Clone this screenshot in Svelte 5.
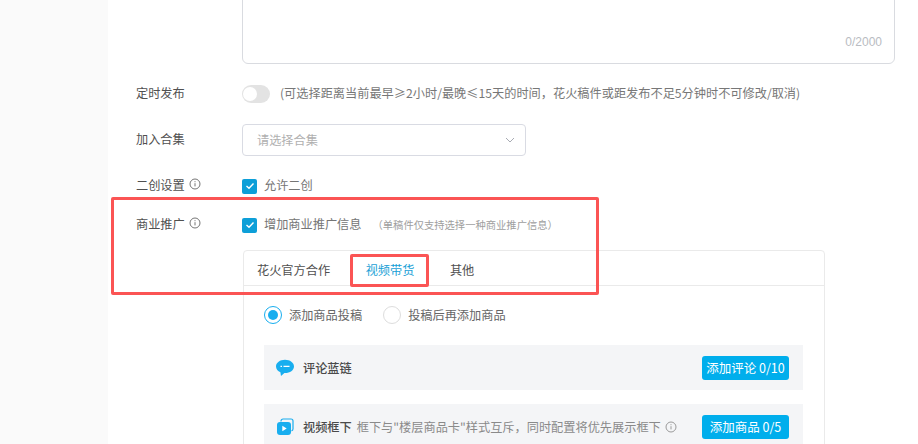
<script>
  const hint = '(可选择距离当前最早≥2小时/最晚≤15天的时间，花火稿件或距发布不足5分钟时不可修改/取消)';
</script>

<div class="page">
  <aside class="side"></aside>
  <main class="main">
    <div class="area"><span class="count">0/2000</span></div>

    <div class="row r-time">
      <div class="label">定时发布</div>
      <div class="content">
        <span class="toggle"><span class="knob"></span></span>
        <span class="hint">{hint}</span>
      </div>
    </div>

    <div class="row r-coll">
      <div class="label">加入合集</div>
      <div class="select">
        <span>请选择合集</span>
        <svg width="10" height="6" viewBox="0 0 10 6"><path d="M1 1l4 4 4-4" fill="none" stroke="#a8abb3" stroke-width="1"/></svg>
      </div>
    </div>

    <div class="row r-second">
      <div class="label">二创设置 <svg class="info" viewBox="0 0 12 12"><circle cx="6" cy="6" r="5" fill="none" stroke="#757575"/><path d="M6 5.2v3.2M6 3.2v1" stroke="#757575"/></svg></div>
      <label class="check">
        <span class="box"><svg width="10" height="8" viewBox="0 0 10 8"><path d="M1.5 4l2.500 2.300 4.500-4.800" fill="none" stroke="#fff" stroke-width="1.400"/></svg></span>
        <span class="muted">允许二创</span>
      </label>
    </div>

    <div class="row r-biz">
      <div class="label">商业推广 <svg class="info" viewBox="0 0 12 12"><circle cx="6" cy="6" r="5" fill="none" stroke="#757575"/><path d="M6 5.2v3.2M6 3.2v1" stroke="#757575"/></svg></div>
      <label class="check">
        <span class="box"><svg width="10" height="8" viewBox="0 0 10 8"><path d="M1.5 4l2.500 2.300 4.500-4.800" fill="none" stroke="#fff" stroke-width="1.400"/></svg></span>
        <span class="muted">增加商业推广信息</span>
        <span class="tip">（单稿件仅支持选择一种商业推广信息）</span>
      </label>
    </div>

    <section class="card">
      <div class="tabs">
        <span class="tab">花火官方合作</span>
        <span class="tab active">视频带货</span>
        <span class="tab">其他</span>
      </div>
      <div class="body">
        <div class="radios">
          <span class="radio"><span class="dot on"></span>添加商品投稿</span>
          <span class="radio"><span class="dot"></span>投稿后再添加商品</span>
        </div>
        <div class="item">
          <svg class="ico" width="18" height="18" viewBox="0 0 18 18"><path d="M9 .8c5 0 9 2.900 9 6.700 0 3.800-4 6.500-9 6.500h-.6L5 17l-.6-3.700C1.800 12.100 0 10 0 7.500 0 3.700 4 .8 9 .8z" fill="#18aeef"/><path d="M4.500 7.400h1.500M7.500 7.400h6" stroke="#fff" stroke-width="1.400"/></svg>
          <b class="name plain">评论蓝链</b>
          <span class="btn">添加评论 0/10</span>
        </div>
        <div class="item">
          <svg class="ico" width="18" height="18" viewBox="0 0 18 18"><path d="M5 3.500V3a2 2 0 0 1 2-2h8a2 2 0 0 1 2 2v8a2 2 0 0 1-1.500 1.900" fill="none" stroke="#18aeef" stroke-width="1.200"/><rect x="1" y="4" width="14" height="13" rx="3" fill="#18aeef"/><path d="M6.300 7.800v5.400l4.400-2.700z" fill="#fff"/></svg>
          <b class="name">视频框下</b>
          <span class="desc">框下与"楼层商品卡"样式互斥，同时配置将优先展示框下</span>
          <svg class="info info-d" viewBox="0 0 12 12"><circle cx="6" cy="6" r="5" fill="none" stroke="#9a9a9a"/><path d="M6 5.200v3.200M6 3.200v1" stroke="#9a9a9a"/></svg>
          <span class="btn">添加商品 0/5</span>
        </div>
      </div>
    </section>

    <div class="mark mark-big"></div>
    <div class="mark mark-tab"></div>
  </main>
</div>

<style>
  :global(body) { margin: 0; background: #fff; }
  .page {
    display: flex;
    width: 918px;
    height: 444px;
    overflow: hidden;
    font-family: "Noto Sans CJK SC", "Liberation Sans", sans-serif;
    font-size: 12.2px;
    color: #505050;
  }
  .side { flex: 0 0 108px; background: #fafafa; }
  .main { flex: 1; position: relative; padding-left: 134px; box-sizing: border-box; }

  .area {
    position: relative;
    box-sizing: border-box;
    width: 653px;
    height: 84px;
    margin-top: -20px;
    border: 1px solid #d9dbe0;
    border-radius: 6px;
  }
  .count { position: absolute; right: 12px; bottom: 13px; font-size: 12px; color: #b9bcc2; line-height: 16px; font-family: "Liberation Sans", sans-serif; }

  .row { display: flex; align-items: center; position: relative; }
  .label {
    position: absolute;
    left: -106px;
    display: flex;
    align-items: center;
    gap: 4px;
    white-space: nowrap;
    color: #505050;
    padding-bottom: 2px;
  }
  .info { width: 12px; height: 12px; margin-top: -2px; }

  .r-time { margin-top: 20px; height: 20px; }
  .content { display: flex; align-items: center; gap: 10px; }
  .toggle { display: block; width: 28px; height: 18px; background: #e3e3e3; border-radius: 9px; position: relative; }
  .knob { position: absolute; left: 1px; top: 2px; width: 14px; height: 14px; border-radius: 50%; background: #fff; }
  .hint { color: #777; white-space: nowrap; padding-bottom: 2px; }

  .r-coll { margin-top: 20px; }
  .select {
    box-sizing: border-box;
    width: 284px;
    height: 32px;
    border: 1px solid #d9dbe3;
    border-radius: 4px;
    padding: 0 10px 0 14px;
    display: flex;
    align-items: center;
    justify-content: space-between;
    color: #b0b0b0;
  }

  .r-second { margin-top: 20px; height: 20px; }
  .r-biz { margin-top: 19px; height: 20px; }
  .check { display: flex; align-items: center; gap: 7px; white-space: nowrap; }
  .box {
    width: 15px; height: 15px;
    background: #0d9fd8;
    border-radius: 2px;
    display: flex;
    align-items: center;
    justify-content: center;
  }
  .muted { color: #757575; padding-bottom: 2px; }
  .tip { color: #9e9e9e; font-size: 10.3px; margin-left: 4px; padding-bottom: 2px; }

  .card {
    box-sizing: border-box;
    width: 582px;
    margin: 15px 0 0 1px;
    border: 1px solid #eaeaea;
    border-radius: 4px 4px 0 0;
    height: 300px;
  }
  .tabs {
    box-sizing: border-box;
    display: flex;
    height: 35px;
    align-items: center;
    padding: 3px 0 0 13px;
    gap: 35.5px;
    border-bottom: 1px solid #eaeaea;
    color: #505050;
  }
  .tab.active { color: #1a9fd6; }
  .body { padding: 0 21px 0 20px; }
  .radios { display: flex; gap: 21px; height: 59px; padding-bottom: 1px; box-sizing: border-box; align-items: center; color: #666; }
  .radio { display: flex; align-items: center; gap: 7px; }
  .dot {
    box-sizing: border-box;
    width: 18px; height: 18px;
    border: 1px solid #ddd;
    border-radius: 50%;
    position: relative;
  }
  .dot.on { border-color: #18aeef; }
  .dot.on::after {
    content: "";
    position: absolute;
    inset: 3px;
    background: #18aeef;
    border-radius: 50%;
  }
  .item {
    display: flex;
    align-items: center;
    height: 45px;
    margin-bottom: 14px;
    background: #f4f5f7;
    padding: 0 14px 0 12px;
  }
  .ico { flex: none; margin-right: 9px; }
  .name { font-weight: 500; color: #4a4a4a; white-space: nowrap; }
  .name.plain { font-weight: 500; }
  .desc { color: #8a8a8a; margin-left: 5px; white-space: nowrap; }
  .info-d { margin: 0 0 0 4px; }
  .btn {
    margin-left: auto;
    width: 87px;
    height: 24px;
    line-height: 24px;
    text-align: center;
    color: #fff;
    font-size: 12.5px;
    background: #00aeec;
    border-radius: 3px;
    white-space: nowrap;
  }

  .mark { position: absolute; box-sizing: border-box; border: 3px solid #fb5454; border-radius: 2px; pointer-events: none; }
  .mark-big { left: 3px; top: 197px; width: 488px; height: 98px; }
  .mark-tab { left: 242px; top: 254px; width: 79px; height: 33px; }
</style>
